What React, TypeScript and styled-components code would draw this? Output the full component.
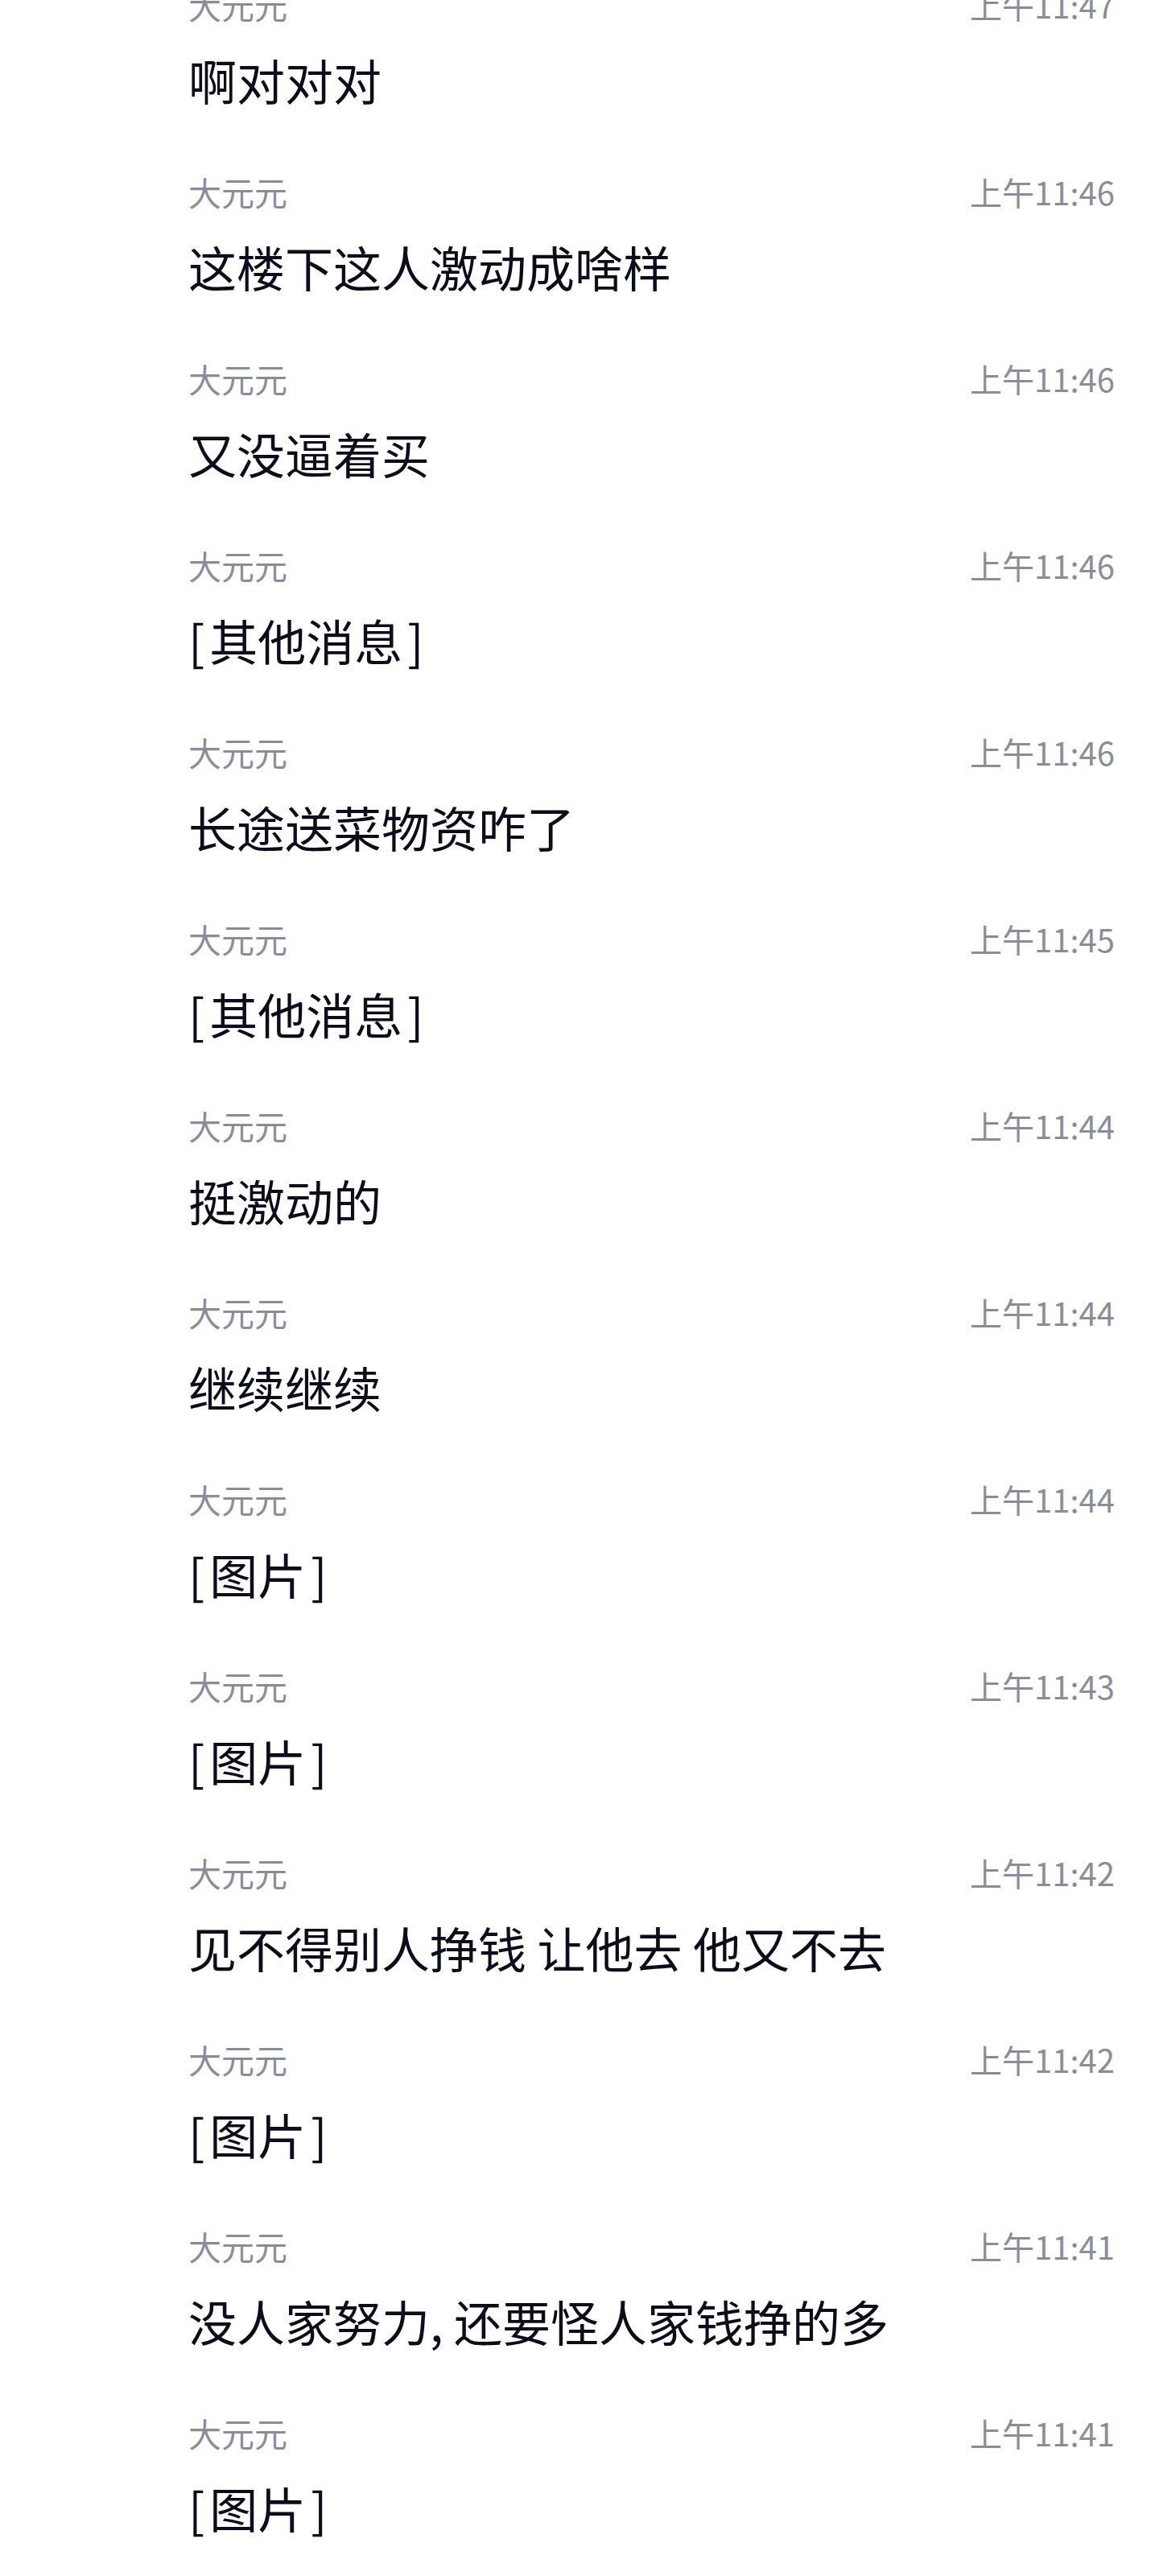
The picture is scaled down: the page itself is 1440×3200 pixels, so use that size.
import React from "react";
import styled, { createGlobalStyle } from "styled-components";

const GlobalStyle = createGlobalStyle`
  html, body {
    margin: 0;
    padding: 0;
    background: #ffffff;
  }
  body {
    font-family: "Noto Sans CJK SC", "Noto Sans", sans-serif;
    -webkit-font-smoothing: antialiased;
  }
`;

const Page = styled.div`
  width: 1440px;
  height: 3200px;
  overflow: hidden;
  background: #ffffff;
`;

const MessageList = styled.ul`
  list-style: none;
  margin: -58px 0 0 0;
  padding: 0;
  display: flex;
  flex-direction: column;
`;

const MessageRow = styled.li`
  height: 232px;
  box-sizing: border-box;
  padding: 36px 55px 35px 234px;
  display: flex;
  flex-direction: column;
  gap: 25px;
`;

const MetaLine = styled.div`
  display: flex;
  justify-content: space-between;
  align-items: center;
  height: 56px;
  font-size: 41px;
  line-height: 56px;
  color: #8a8d98;
`;

const Sender = styled.span`
  font-weight: 400;
`;

const Time = styled.span`
  font-size: 40px;
  font-weight: 400;
`;

const Body = styled.div`
  font-size: 60px;
  line-height: 80px;
  height: 80px;
  color: #0b0e1a;
  white-space: pre;
`;

const Bracket = styled.span<{ $side: "open" | "close" }>`
  margin-left: ${(p) => (p.$side === "close" ? "6px" : "0")};
  margin-right: ${(p) => (p.$side === "open" ? "6px" : "0")};
`;

type Msg = { name: string; time: string; text: string };

const messages: Msg[] = [
  { name: "大元元", time: "上午11:47", text: "啊对对对" },
  { name: "大元元", time: "上午11:46", text: "这楼下这人激动成啥样" },
  { name: "大元元", time: "上午11:46", text: "又没逼着买" },
  { name: "大元元", time: "上午11:46", text: "[其他消息]" },
  { name: "大元元", time: "上午11:46", text: "长途送菜物资咋了" },
  { name: "大元元", time: "上午11:45", text: "[其他消息]" },
  { name: "大元元", time: "上午11:44", text: "挺激动的" },
  { name: "大元元", time: "上午11:44", text: "继续继续" },
  { name: "大元元", time: "上午11:44", text: "[图片]" },
  { name: "大元元", time: "上午11:43", text: "[图片]" },
  { name: "大元元", time: "上午11:42", text: "见不得别人挣钱 让他去 他又不去" },
  { name: "大元元", time: "上午11:42", text: "[图片]" },
  { name: "大元元", time: "上午11:41", text: "没人家努力, 还要怪人家钱挣的多" },
  { name: "大元元", time: "上午11:41", text: "[图片]" },
];

function renderText(text: string) {
  const m = text.match(/^\[(.*)\]$/);
  if (!m) return text;
  return (
    <>
      <Bracket $side="open">[</Bracket>
      {m[1]}
      <Bracket $side="close">]</Bracket>
    </>
  );
}

export default function App() {
  return (
    <>
      <GlobalStyle />
      <Page>
        <MessageList>
          {messages.map((m, i) => (
            <MessageRow key={i}>
              <MetaLine>
                <Sender>{m.name}</Sender>
                <Time>{m.time}</Time>
              </MetaLine>
              <Body>{renderText(m.text)}</Body>
            </MessageRow>
          ))}
        </MessageList>
      </Page>
    </>
  );
}
